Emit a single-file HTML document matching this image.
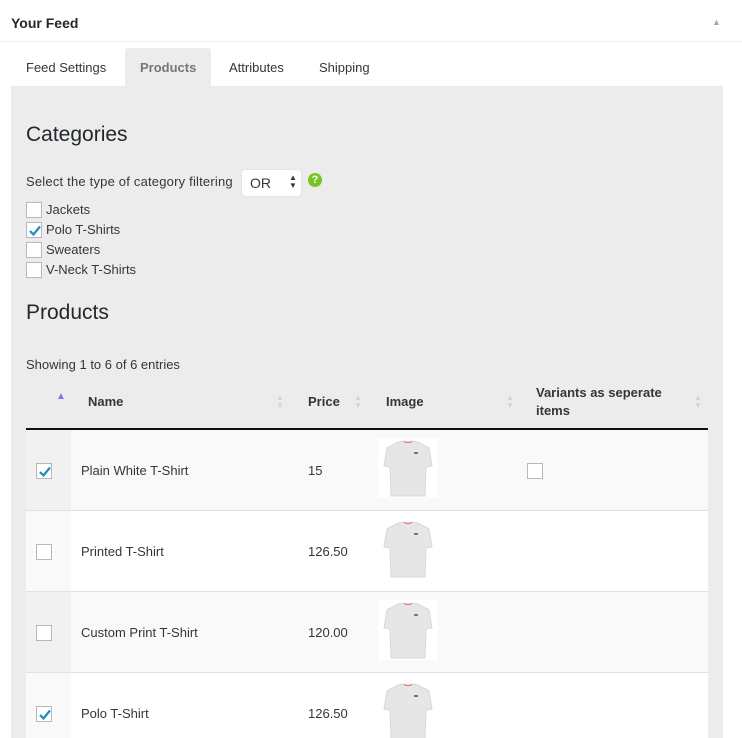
<!DOCTYPE html>
<html><head><style>
*{margin:0;padding:0;box-sizing:border-box}
html,body{width:742px;height:738px;overflow:hidden}
body{background:#fff;font-family:"Liberation Sans",sans-serif;font-size:13px;color:#32373c;position:relative}
.a{position:absolute;white-space:nowrap}
.cb{position:absolute;width:16px;height:16px;border:1px solid #b4b9be;background:#fff}
.ck{position:absolute;left:1px;top:1px}
.row{position:absolute;left:26px;width:682px;height:81px;border-bottom:1px solid #e1e1e1}
.row .c1{position:absolute;left:0;top:0;width:45px;height:80px}
.sh{position:absolute;left:352px;top:8px;width:60px;height:60px;background:#fff}
.so{position:absolute;font-size:8px;line-height:8px;color:#d4d4d4}
</style></head><body>
<svg width="0" height="0" style="position:absolute"><defs>
<g id="t"><path d="M20,4 L26,3 Q30,6 34,3 L40,4 L51,10 L54,28 L48,29 L47,58 L13,58 L12,29 L6,28 L9,10 Z" fill="#e6e6e6" stroke="#d8d8d8"/><path d="M26,3.5 Q30,5.5 34,3.5" stroke="#e07060" fill="none" stroke-width="1.2"/><rect x="36" y="14" width="4" height="2" fill="#777"/></g>
<path id="k" d="M2,7 L5.5,10.5 L12,2.5" fill="none" stroke="#1e8cbe" stroke-width="2.2"/>
</defs></svg>
<div class="a" style="left:11px;top:15px;font-size:14px;font-weight:bold;color:#23282d">Your Feed</div>
<div class="a" style="left:712px;top:17px;font-size:9px;color:#aaa">▲</div>
<div style="position:absolute;left:0;top:41px;width:742px;height:1px;background:#eee"></div>
<div style="position:absolute;left:125px;top:48px;width:86px;height:40px;background:#ececec;border-radius:3px 3px 0 0"></div>
<div class="a" style="left:26px;top:60px">Feed Settings</div>
<div class="a" style="left:140px;top:60px;color:#777;font-weight:bold">Products</div>
<div class="a" style="left:229px;top:60px">Attributes</div>
<div class="a" style="left:319px;top:60px">Shipping</div>
<div style="position:absolute;left:11px;top:86px;width:712px;height:660px;background:#ececec"></div>
<div class="a" style="left:26px;top:123px;font-size:21px;color:#23282d">Categories</div>
<div class="a" style="left:26px;top:174px;letter-spacing:0.2px">Select the type of category filtering</div>
<div style="position:absolute;left:241px;top:169px;width:61px;height:28px;background:#fff;border-radius:4px;border:1px solid #e5e5e5"></div>
<div class="a" style="left:250px;top:175px;font-size:14px">OR</div>
<div class="a" style="left:289px;top:174px;font-size:8px;line-height:8px">▲<br>▼</div>
<div style="position:absolute;left:308px;top:173px;width:14px;height:14px;border-radius:50%;background:#7ac422;color:#fff;font-size:11px;font-weight:bold;text-align:center;line-height:14px">?</div>
<div class="cb" style="left:26px;top:202px"></div><div class="a" style="left:46px;top:202px">Jackets</div>
<div class="cb" style="left:26px;top:222px"><svg class="ck" width="14" height="14"><use href="#k"/></svg></div><div class="a" style="left:46px;top:222px">Polo T-Shirts</div>
<div class="cb" style="left:26px;top:242px"></div><div class="a" style="left:46px;top:242px">Sweaters</div>
<div class="cb" style="left:26px;top:262px"></div><div class="a" style="left:46px;top:262px">V-Neck T-Shirts</div>
<div class="a" style="left:26px;top:301px;font-size:21px;color:#23282d">Products</div>
<div class="a" style="left:26px;top:357px">Showing 1 to 6 of 6 entries</div>
<div style="position:absolute;left:26px;top:428px;width:682px;height:2px;background:#111"></div>
<div class="a" style="left:56px;top:391px;font-size:10px;color:#7b7bd8">▲</div>
<div class="a" style="left:88px;top:394px;font-weight:bold">Name</div>
<div class="so" style="left:276px;top:394px">▲<br>▼</div>
<div class="a" style="left:308px;top:394px;font-weight:bold">Price</div>
<div class="so" style="left:354px;top:394px">▲<br>▼</div>
<div class="a" style="left:386px;top:394px;font-weight:bold">Image</div>
<div class="so" style="left:506px;top:394px">▲<br>▼</div>
<div class="a" style="left:536px;top:384px;font-weight:bold;line-height:18px">Variants as seperate<br>items</div>
<div class="so" style="left:694px;top:394px">▲<br>▼</div>

<div class="row" style="top:430px;background:#f9f9f9"><div class="c1" style="background:#f1f1f1"></div>
<div class="cb" style="left:10px;top:33px"><svg class="ck" width="14" height="14"><use href="#k"/></svg></div>
<div class="a" style="left:55px;top:33px">Plain White T-Shirt</div><div class="a" style="left:282px;top:33px">15</div>
<div class="sh"><svg width="60" height="60"><use href="#t"/></svg></div>
<div class="cb" style="left:501px;top:33px"></div></div>
<div class="row" style="top:511px;background:#fff"><div class="c1" style="background:#f9f9f9"></div>
<div class="cb" style="left:10px;top:33px"></div>
<div class="a" style="left:55px;top:33px">Printed T-Shirt</div><div class="a" style="left:282px;top:33px">126.50</div>
<div class="sh"><svg width="60" height="60"><use href="#t"/></svg></div></div>
<div class="row" style="top:592px;background:#f9f9f9"><div class="c1" style="background:#f1f1f1"></div>
<div class="cb" style="left:10px;top:33px"></div>
<div class="a" style="left:55px;top:33px">Custom Print T-Shirt</div><div class="a" style="left:282px;top:33px">120.00</div>
<div class="sh"><svg width="60" height="60"><use href="#t"/></svg></div></div>
<div class="row" style="top:673px;background:#fff"><div class="c1" style="background:#f9f9f9"></div>
<div class="cb" style="left:10px;top:33px"><svg class="ck" width="14" height="14"><use href="#k"/></svg></div>
<div class="a" style="left:55px;top:33px">Polo T-Shirt</div><div class="a" style="left:282px;top:33px">126.50</div>
<div class="sh"><svg width="60" height="60"><use href="#t"/></svg></div></div>
</body></html>
